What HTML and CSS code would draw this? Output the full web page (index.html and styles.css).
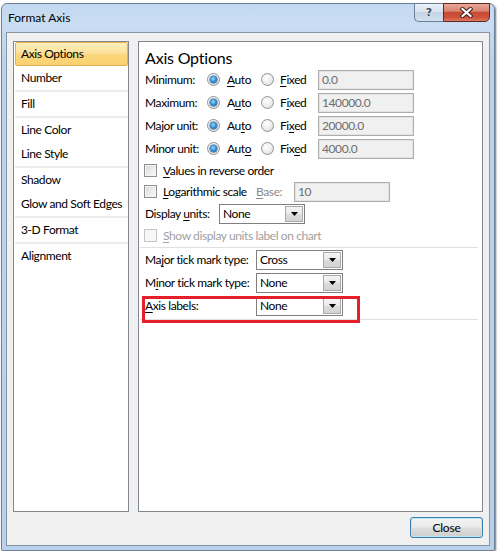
FILE: index.html
```html
<!DOCTYPE html>
<html>
<head>
<meta charset="utf-8">
<title>Format Axis</title>
<link rel="stylesheet" href="styles.css">
</head>
<body>
<div class="window">
  <div class="titlebar">
    <span class="title">Format Axis</span>
    <div class="caption-btns">
      <div class="cap-help">?</div>
      <div class="cap-close">
        <svg width="13" height="11" viewBox="0 0 13 11"><path d="M2.5 2 L10.5 9 M10.5 2 L2.5 9" stroke="#3b2420" stroke-width="4.2" stroke-linecap="square"/><path d="M2.5 2 L10.5 9 M10.5 2 L2.5 9" stroke="#ffffff" stroke-width="2.2" stroke-linecap="square"/></svg>
      </div>
    </div>
  </div>
  <div class="client">
    <div class="main">
      <div class="nav">
        <div class="nav-item selected">Axis Options</div>
        <div class="nav-item">Number</div>
        <div class="nav-sep"></div>
        <div class="nav-item">Fill</div>
        <div class="nav-sep"></div>
        <div class="nav-item">Line Color</div>
        <div class="nav-item">Line Style</div>
        <div class="nav-sep"></div>
        <div class="nav-item">Shadow</div>
        <div class="nav-item">Glow and Soft Edges</div>
        <div class="nav-sep"></div>
        <div class="nav-item">3-D Format</div>
        <div class="nav-sep"></div>
        <div class="nav-item">Alignment</div>
      </div>
      <div class="panel">
        <div class="heading">Axis Options</div>

        <div class="row">
          <span class="lbl lbl-unit">Minimum:</span>
          <span class="opt opt-auto"><span class="radio on"></span><span><u>A</u>uto</span></span>
          <span class="opt opt-fixed"><span class="radio"></span><span><u>F</u>ixed</span></span>
          <span class="field">0.0</span>
        </div>
        <div class="row">
          <span class="lbl lbl-unit">Maximum:</span>
          <span class="opt opt-auto"><span class="radio on"></span><span>A<u>u</u>to</span></span>
          <span class="opt opt-fixed"><span class="radio"></span><span>F<u>i</u>xed</span></span>
          <span class="field">140000.0</span>
        </div>
        <div class="row">
          <span class="lbl lbl-unit">Major unit:</span>
          <span class="opt opt-auto"><span class="radio on"></span><span>Au<u>t</u>o</span></span>
          <span class="opt opt-fixed"><span class="radio"></span><span>Fi<u>x</u>ed</span></span>
          <span class="field">20000.0</span>
        </div>
        <div class="row">
          <span class="lbl lbl-unit">Minor unit:</span>
          <span class="opt opt-auto"><span class="radio on"></span><span>Aut<u>o</u></span></span>
          <span class="opt opt-fixed"><span class="radio"></span><span>Fix<u>e</u>d</span></span>
          <span class="field">4000.0</span>
        </div>

        <div class="crow">
          <span class="check"></span><span><u>V</u>alues in reverse order</span>
        </div>
        <div class="crow">
          <span class="log-check"><span class="check"></span><span><u>L</u>ogarithmic scale</span></span>
          <span class="base-lbl"><u>B</u>ase:</span>
          <span class="field">10</span>
        </div>
        <div class="row">
          <span class="lbl lbl-disp">Display <u>u</u>nits:</span>
          <span class="select sel-disp"><span class="sel-text">None</span><span class="sel-btn"><svg width="7" height="4" viewBox="0 0 7 4"><polygon points="0,0 7,0 3.5,4" fill="#000"/></svg></span></span>
        </div>
        <div class="crow disabled">
          <span class="check off"></span><span><u>S</u>how display units label on chart</span>
        </div>

        <div class="sep sep-a"></div>

        <div class="row">
          <span class="lbl lbl-tick">Ma<u>j</u>or tick mark type:</span>
          <span class="select sel-tick"><span class="sel-text">Cross</span><span class="sel-btn"><svg width="7" height="4" viewBox="0 0 7 4"><polygon points="0,0 7,0 3.5,4" fill="#000"/></svg></span></span>
        </div>
        <div class="row">
          <span class="lbl lbl-tick">M<u>i</u>nor tick mark type:</span>
          <span class="select sel-tick"><span class="sel-text">None</span><span class="sel-btn"><svg width="7" height="4" viewBox="0 0 7 4"><polygon points="0,0 7,0 3.5,4" fill="#000"/></svg></span></span>
        </div>
        <div class="row highlight">
          <span class="lbl lbl-tick"><u>A</u>xis labels:</span>
          <span class="select sel-tick"><span class="sel-text">None</span><span class="sel-btn"><svg width="7" height="4" viewBox="0 0 7 4"><polygon points="0,0 7,0 3.5,4" fill="#000"/></svg></span></span>
        </div>

        <div class="sep sep-b"></div>
      </div>
    </div>
    <div class="footer">
      <button class="btn">Close</button>
    </div>
  </div>
</div>
</body>
</html>
```

FILE: styles.css
```css
* { box-sizing: border-box; }

html, body {
  margin: 0;
  background: #ffffff;
}

body {
  padding: 3px 0 0 1px;
  font-family: Lato, "Liberation Sans", sans-serif;
  font-size: 12px;
  letter-spacing: -0.4px;
  color: #000;
}

u { text-decoration: underline; text-underline-offset: 2px; }

.window {
  width: 494px;
  height: 548px;
  border: 1px solid #6f8197;
  border-radius: 6px 6px 2px 2px;
  background: linear-gradient(to bottom, #c3d9f0 0px, #c9ddf2 20px, #bad2ec 60px, #b9d1eb 100%);
  padding: 0 4px 4px 4px;
  box-shadow: 1px 1px 2px rgba(0,0,0,0.55);
  display: flex;
  flex-direction: column;
}

.titlebar {
  height: 28px;
  display: flex;
  align-items: flex-start;
  justify-content: space-between;
}

.title {
  padding-left: 2px;
  line-height: 28px;
  font-size: 12px;
  letter-spacing: 0;
  color: #000;
}

.caption-btns {
  display: flex;
  margin-top: -1px;
}

.cap-help {
  width: 29px;
  height: 19px;
  border: 1px solid #6c7e93;
  border-right: none;
  border-radius: 0 0 0 5px;
  background: linear-gradient(to bottom, #e9f0f8 0%, #d8e3ef 45%, #c4d4e6 50%, #d2e0ef 100%);
  text-align: center;
  font-family: "DejaVu Sans", sans-serif;
  font-weight: bold;
  font-size: 11px;
  letter-spacing: 0;
  line-height: 17px;
  color: #3c4c5e;
  text-shadow: 0 0 1px #fff, 0 0 1px #fff;
}

.cap-close {
  width: 47px;
  height: 19px;
  border: 1px solid #5e2a24;
  border-radius: 0 0 5px 0;
  background: linear-gradient(to bottom, #e8a898 0%, #d98473 42%, #c74a34 50%, #cf523b 78%, #de7a62 100%);
  display: flex;
  align-items: center;
  justify-content: center;
}

.client {
  flex: 1;
  border: 1px solid #8795a5;
  background: #f0f0f0;
  padding: 8px 6px 7px 6px;
  display: flex;
  flex-direction: column;
}

.main {
  height: 471px;
  display: flex;
  gap: 9px;
}

.nav {
  width: 116px;
  flex: none;
  background: #fff;
  border: 1px solid #828790;
  padding: 0 0 0 1px;
}

.nav-item {
  height: 24px;
  line-height: 22px;
  padding-left: 5px;
  border: 1px solid transparent;
  white-space: nowrap;
}

.nav-item.selected {
  border-color: #e2b04c;
  border-radius: 2px;
  background: linear-gradient(to bottom, #fef0bd 0%, #fde19a 45%, #fbd67a 55%, #fad170 100%);
}

.nav-sep {
  height: 2px;
  background: #ececec;
}

.panel {
  flex: 1;
  background: #fff;
  border: 1px solid #828790;
  padding: 0 0 0 6px;
}

.heading {
  padding-top: 6px;
  font-size: 16px;
  letter-spacing: -0.2px;
  line-height: 20px;
}

.row {
  height: 23px;
  display: flex;
  align-items: center;
}

.crow {
  height: 21px;
  display: flex;
  align-items: center;
}

.lbl { flex: none; white-space: nowrap; }
.lbl-unit { width: 62px; }
.lbl-disp { width: 74px; }
.lbl-tick { width: 111px; }

.opt {
  flex: none;
  display: flex;
  align-items: center;
}
.opt-auto { width: 54px; }
.opt-auto .radio { margin-right: 7px; }
.opt-fixed { width: 57px; }
.opt-fixed .radio { margin-right: 6px; }

.radio {
  width: 13px;
  height: 13px;
  border-radius: 50%;
  border: 1px solid #8f9398;
  background: radial-gradient(circle at 40% 35%, #ffffff 0%, #ececec 55%, #cfcfcf 100%);
  display: flex;
  align-items: center;
  justify-content: center;
}

.radio.on::after {
  content: "";
  width: 7px;
  height: 7px;
  border-radius: 50%;
  background: radial-gradient(circle at 45% 40%, #9fdcff 0%, #3a94d6 45%, #11508e 100%);
  box-shadow: 0 0 0 0.5px #1c4a7a;
}

.field {
  flex: none;
  width: 96px;
  height: 20px;
  border: 1px solid #adadad;
  background: #f0f0f0;
  color: #6d6d6d;
  padding-left: 3px;
  line-height: 18px;
  box-shadow: inset 0 0 0 1px #e3e3e3;
}

.check {
  flex: none;
  width: 13px;
  height: 13px;
  margin-left: -1px;
  margin-right: 6px;
  border: 1px solid #8e8f8f;
  background: linear-gradient(135deg, #d8d8d8 0%, #eeeeee 60%, #fafafa 100%);
  box-shadow: inset 0 0 0 1px #f4f4f4;
}

.check.off {
  border-color: #c5c5c5;
  background: #f7f7f7;
  box-shadow: none;
}

.disabled { color: #a0a0a0; }

.log-check {
  width: 111px;
  flex: none;
  display: flex;
  align-items: center;
  white-space: nowrap;
}

.base-lbl {
  width: 38px;
  flex: none;
  color: #8a8a8a;
}

.select {
  flex: none;
  height: 20px;
  border: 1px solid #7f7f7f;
  background: #fff;
  display: flex;
  align-items: stretch;
  padding: 1px;
}
.sel-disp { width: 86px; }
.sel-tick { width: 87px; }

.sel-text {
  flex: 1;
  padding-left: 2px;
  line-height: 16px;
}

.sel-btn {
  width: 18px;
  border: 1px solid #a9a9a9;
  background: linear-gradient(to bottom, #f4f4f4 0%, #e9e9e9 50%, #dcdcdc 51%, #d4d4d4 100%);
  display: flex;
  align-items: center;
  justify-content: center;
}

.sep {
  height: 1px;
  background: #e0e0e0;
  margin-left: -5px;
  margin-right: 4px;
}
.sep-a { margin-top: 1px; }
.sep-b { margin-top: 2px; }

.highlight { position: relative; }
.highlight::after {
  content: "";
  position: absolute;
  left: -3px;
  top: 2px;
  width: 212px;
  height: 21px;
  border: 3px solid #e5202b;
  pointer-events: none;
}

.footer {
  margin-top: 5px;
  display: flex;
  justify-content: flex-end;
}

.btn {
  width: 73px;
  height: 21px;
  margin: 0;
  padding: 0;
  font-family: Lato, "Liberation Sans", sans-serif;
  font-size: 12px;
  letter-spacing: -0.2px;
  color: #000;
  border: 1px solid #3c7fb1;
  border-radius: 3px;
  background: linear-gradient(to bottom, #f2f2f2 0%, #ebebeb 48%, #dddddd 52%, #cfcfcf 100%);
  box-shadow: inset 0 0 0 1px #bfe6fb;
}
```
